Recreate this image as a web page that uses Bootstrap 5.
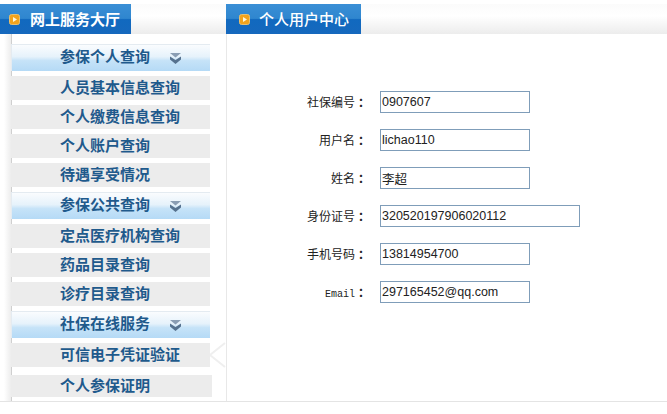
<!DOCTYPE html>
<html lang="zh">
<head>
<meta charset="utf-8">
<title>个人用户中心</title>
<link rel="stylesheet" href="https://cdn.jsdelivr.net/npm/bootstrap@5.3.0/dist/css/bootstrap.min.css">
<style>
html,body{margin:0;height:414px;overflow:hidden;background:#fff}
body{font-family:"Noto Sans CJK SC","Liberation Sans",sans-serif}
.shell{width:667px;height:402px;padding-top:4px;border-bottom:1px solid #e4e4e4}
.topband{height:30px;background:linear-gradient(#fbfbfb 0,#fff 12px,#ececec 100%)}
.tabhead{height:30px;background:linear-gradient(#3a8fd6 0,#2f86cf 48%,#1169bf 52%,#1668bd 100%);color:#fff;font-size:15px;line-height:30px}
.lefthead{width:131px;padding-left:9px;gap:10px;font-weight:700}
.righthead{width:135px;margin-left:95px;padding-left:13px;gap:9px;font-weight:500}
.playicon{width:11px;height:11px;flex:none;display:block}
.sidecol{width:227px;height:367px;padding:10px 0 0 11px;border-right:1px solid #e8e8e8;position:relative}
.sideline{position:absolute;left:0;top:0;bottom:0;width:12px;background:linear-gradient(90deg,#fff 0,#fff 4px,#ededed 11px,#cfcfcf 11px,#cfcfcf 12px)}
.sidegroup{width:199px;height:27px;margin-bottom:5px;background:linear-gradient(#fafcfe 0,#e6f2fb 45%,#c6e3f8 60%,#b5daf6 100%);border:1px solid #e4ebf1;border-bottom:0;border-right:0;color:#1f5a8c;font-size:15px;font-weight:700;padding:0 0 3px 48px;position:relative;z-index:1}
.sideitem{width:199px;height:24px;margin-bottom:5px;background:#ececec;color:#1f5a8c;font-size:15px;font-weight:700;padding:0 0 2px 49px;position:relative;z-index:1}
.sideitem.tightgap{margin-bottom:8px}
.sideitem.lastitem{width:201px;height:22px;margin-bottom:0}
.chev{width:11px;height:11px;margin:3px 0 0 20px;flex:none}
.pointer{position:absolute;left:209px;top:308px;width:17px;height:26px}
.formcol{padding-top:57px;width:440px}
.fieldrow{height:38px;font-size:12px;color:#222}
.fieldlabel{width:140px;text-align:right;margin-right:13px;margin-bottom:16px;line-height:22px}
.colonmark{display:inline-block;width:12px;margin-left:3px;margin-right:-3px;font-weight:700;text-align:left}
.latinword{font-family:"Liberation Mono",monospace;font-size:10px;font-weight:400}
.fieldinput{width:150px;height:22px;border:1px solid #7f9db9;padding:0 1px;font-family:"Liberation Sans","Noto Sans CJK SC",sans-serif;font-size:12.500px;color:#222;border-radius:0;outline:0;background:#fff;margin-bottom:16px}
.fieldinput.widefield{width:200px}
</style>
</head>
<body>
<div class="shell">
  <div class="topband d-flex">
    <div class="tabhead lefthead d-flex align-items-center">
      <svg class="playicon" viewBox="0 0 11 11"><rect x=".5" y=".5" width="10" height="10" rx="2" fill="#f2a31c" stroke="#e6c070"/><path d="M4 3l4 2.500L4 8z" fill="#fff6d8"/></svg>
      <span>网上服务大厅</span>
    </div>
    <div class="tabhead righthead d-flex align-items-center">
      <svg class="playicon" viewBox="0 0 11 11"><rect x=".5" y=".5" width="10" height="10" rx="2" fill="#f2a31c" stroke="#e6c070"/><path d="M4 3l4 2.500L4 8z" fill="#fff6d8"/></svg>
      <span>个人用户中心</span>
    </div>
  </div>
  <div class="d-flex">
    <div class="sidecol">
      <div class="sideline"></div>
      <div class="sidegroup d-flex align-items-center">参保个人查询<svg class="chev" viewBox="0 0 11 11"><path d="M0 0h11L5.500 4.500z" fill="#8a9db3"/><path d="M0 3.500L5.500 7 11 3.500V6.500L5.500 11 0 6.500z" fill="#56728f"/></svg></div>
      <div class="sideitem d-flex align-items-center">人员基本信息查询</div>
      <div class="sideitem d-flex align-items-center">个人缴费信息查询</div>
      <div class="sideitem d-flex align-items-center">个人账户查询</div>
      <div class="sideitem d-flex align-items-center">待遇享受情况</div>
      <div class="sidegroup d-flex align-items-center">参保公共查询<svg class="chev" viewBox="0 0 11 11"><path d="M0 0h11L5.500 4.500z" fill="#8a9db3"/><path d="M0 3.500L5.500 7 11 3.500V6.500L5.500 11 0 6.500z" fill="#56728f"/></svg></div>
      <div class="sideitem d-flex align-items-center">定点医疗机构查询</div>
      <div class="sideitem d-flex align-items-center">药品目录查询</div>
      <div class="sideitem d-flex align-items-center">诊疗目录查询</div>
      <div class="sidegroup d-flex align-items-center">社保在线服务<svg class="chev" viewBox="0 0 11 11"><path d="M0 0h11L5.500 4.500z" fill="#8a9db3"/><path d="M0 3.500L5.500 7 11 3.500V6.500L5.500 11 0 6.500z" fill="#56728f"/></svg></div>
      <div class="sideitem tightgap d-flex align-items-center">可信电子凭证验证</div>
      <div class="sideitem lastitem d-flex align-items-center">个人参保证明</div>
      <svg class="pointer" viewBox="0 0 17 26"><path d="M16 1L1 13l15 12" fill="#fff" stroke="#efefef" stroke-width="2"/></svg>
    </div>
    <div class="formcol">
      <div class="fieldrow d-flex align-items-start"><label class="fieldlabel">社保编号<span class="colonmark">：</span></label><input class="fieldinput" value="0907607"></div>
      <div class="fieldrow d-flex align-items-start"><label class="fieldlabel">用户名<span class="colonmark">：</span></label><input class="fieldinput" value="lichao110"></div>
      <div class="fieldrow d-flex align-items-start"><label class="fieldlabel">姓名<span class="colonmark">：</span></label><input class="fieldinput" value="李超"></div>
      <div class="fieldrow d-flex align-items-start"><label class="fieldlabel">身份证号<span class="colonmark">：</span></label><input class="fieldinput widefield" value="320520197906020112"></div>
      <div class="fieldrow d-flex align-items-start"><label class="fieldlabel">手机号码<span class="colonmark">：</span></label><input class="fieldinput" value="13814954700"></div>
      <div class="fieldrow d-flex align-items-start"><label class="fieldlabel"><span class="latinword">Email</span><span class="colonmark">：</span></label><input class="fieldinput" value="297165452@qq.com"></div>
    </div>
  </div>
</div>
<script src="https://cdn.jsdelivr.net/npm/bootstrap@5.3.0/dist/js/bootstrap.bundle.min.js"></script>
</body>
</html>
